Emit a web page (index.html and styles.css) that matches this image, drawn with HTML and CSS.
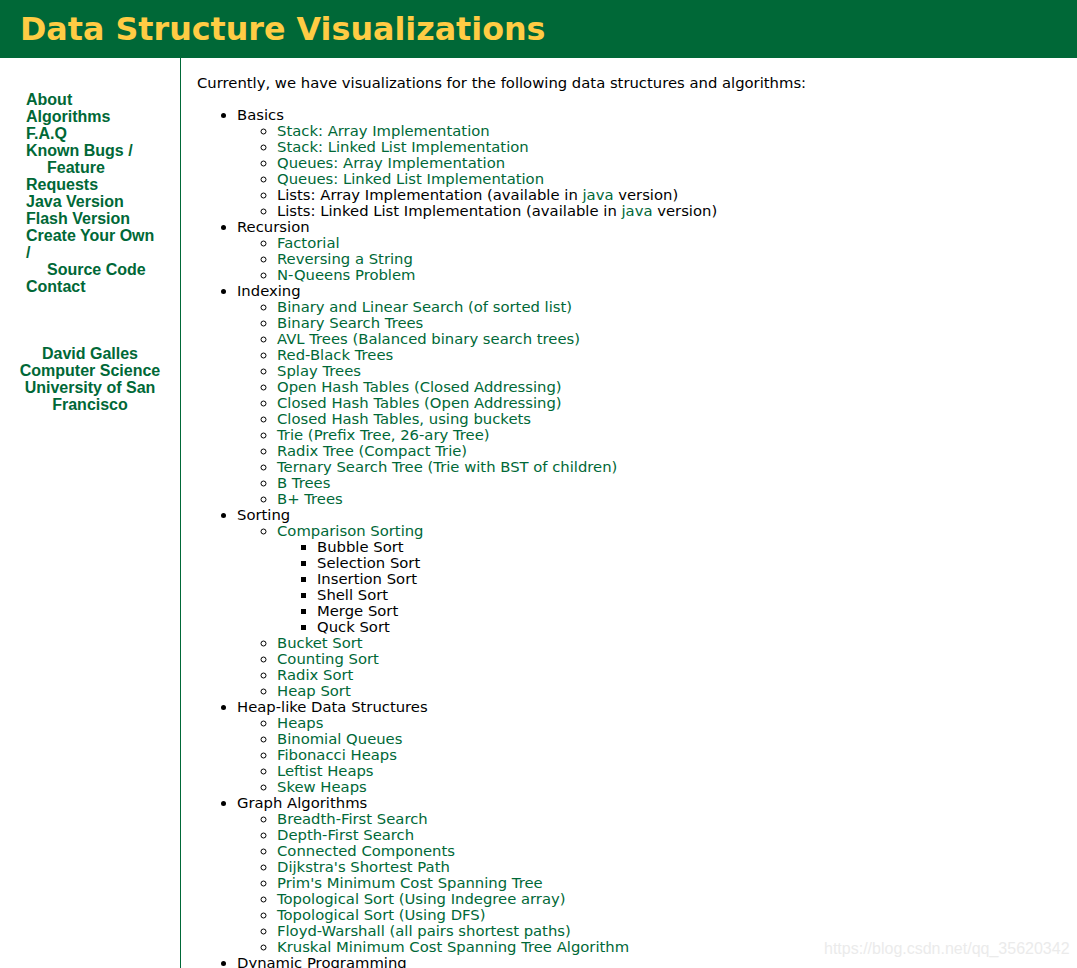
FILE: index.html
```html
<!DOCTYPE html>
<html>
<head>
<meta charset="utf-8">
<title>Data Structure Visualizations</title>
<link rel="stylesheet" href="styles.css">
</head>
<body>
<header class="header">
  <h1 class="title">Data Structure Visualizations</h1>
</header>
<div class="page">
  <nav class="sidebar">
    <ul class="nav">
      <li><a href="#">About</a></li>
      <li><a href="#">Algorithms</a></li>
      <li><a href="#">F.A.Q</a></li>
      <li><a href="#">Known Bugs /<br><span class="indent">Feature Requests</span></a></li>
      <li><a href="#">Java Version</a></li>
      <li><a href="#">Flash Version</a></li>
      <li><a href="#">Create Your Own /<br><span class="indent">Source Code</span></a></li>
      <li><a href="#">Contact</a></li>
    </ul>
    <div class="author">
      <a href="#">David Galles</a><br>
      <a href="#">Computer Science</a><br>
      <a href="#">University of San Francisco</a>
    </div>
  </nav>
  <main class="content">
    <p class="intro">Currently, we have visualizations for the following data structures and algorithms:</p>
    <ul class="l1">
      <li>Basics
        <ul class="l2">
          <li><a href="#">Stack: Array Implementation</a></li>
          <li><a href="#">Stack: Linked List Implementation</a></li>
          <li><a href="#">Queues: Array Implementation</a></li>
          <li><a href="#">Queues: Linked List Implementation</a></li>
          <li>Lists: Array Implementation (available in <a href="#">java</a> version)</li>
          <li>Lists: Linked List Implementation (available in <a href="#">java</a> version)</li>
        </ul>
      </li>
      <li>Recursion
        <ul class="l2">
          <li><a href="#">Factorial</a></li>
          <li><a href="#">Reversing a String</a></li>
          <li><a href="#">N-Queens Problem</a></li>
        </ul>
      </li>
      <li>Indexing
        <ul class="l2">
          <li><a href="#">Binary and Linear Search (of sorted list)</a></li>
          <li><a href="#">Binary Search Trees</a></li>
          <li><a href="#">AVL Trees (Balanced binary search trees)</a></li>
          <li><a href="#">Red-Black Trees</a></li>
          <li><a href="#">Splay Trees</a></li>
          <li><a href="#">Open Hash Tables (Closed Addressing)</a></li>
          <li><a href="#">Closed Hash Tables (Open Addressing)</a></li>
          <li><a href="#">Closed Hash Tables, using buckets</a></li>
          <li><a href="#">Trie (Prefix Tree, 26-ary Tree)</a></li>
          <li><a href="#">Radix Tree (Compact Trie)</a></li>
          <li><a href="#">Ternary Search Tree (Trie with BST of children)</a></li>
          <li><a href="#">B Trees</a></li>
          <li><a href="#">B+ Trees</a></li>
        </ul>
      </li>
      <li>Sorting
        <ul class="l2">
          <li><a href="#">Comparison Sorting</a>
            <ul class="l3">
              <li>Bubble Sort</li>
              <li>Selection Sort</li>
              <li>Insertion Sort</li>
              <li>Shell Sort</li>
              <li>Merge Sort</li>
              <li>Quck Sort</li>
            </ul>
          </li>
          <li><a href="#">Bucket Sort</a></li>
          <li><a href="#">Counting Sort</a></li>
          <li><a href="#">Radix Sort</a></li>
          <li><a href="#">Heap Sort</a></li>
        </ul>
      </li>
      <li>Heap-like Data Structures
        <ul class="l2">
          <li><a href="#">Heaps</a></li>
          <li><a href="#">Binomial Queues</a></li>
          <li><a href="#">Fibonacci Heaps</a></li>
          <li><a href="#">Leftist Heaps</a></li>
          <li><a href="#">Skew Heaps</a></li>
        </ul>
      </li>
      <li>Graph Algorithms
        <ul class="l2">
          <li><a href="#">Breadth-First Search</a></li>
          <li><a href="#">Depth-First Search</a></li>
          <li><a href="#">Connected Components</a></li>
          <li><a href="#">Dijkstra's Shortest Path</a></li>
          <li><a href="#">Prim's Minimum Cost Spanning Tree</a></li>
          <li><a href="#">Topological Sort (Using Indegree array)</a></li>
          <li><a href="#">Topological Sort (Using DFS)</a></li>
          <li><a href="#">Floyd-Warshall (all pairs shortest paths)</a></li>
          <li><a href="#">Kruskal Minimum Cost Spanning Tree Algorithm</a></li>
        </ul>
      </li>
      <li>Dynamic Programming
        <ul class="l2">
          <li><a href="#">Calculating nth Fibonacci number</a></li>
          <li><a href="#">Making Change</a></li>
          <li><a href="#">Longest Common Subsequence</a></li>
        </ul>
      </li>
    </ul>
  </main>
</div>
<div class="watermark">https://blog.csdn.net/qq_35620342</div>
</body>
</html>
```
FILE: styles.css
```css
html, body {
  margin: 0;
  padding: 0;
  background: #fff;
}
body {
  font-family: "DejaVu Sans", "Liberation Sans", Arial, sans-serif;
  font-size: 14.8px;
  color: #000;
}
a {
  color: #006837;
  text-decoration: none;
}
.header {
  background: #006837;
  height: 58px;
  display: flex;
  align-items: center;
  padding-left: 20px;
}
.title {
  margin: 0;
  font-family: "DejaVu Sans", sans-serif;
  font-weight: bold;
  font-size: 31.75px;
  color: #ffcc44;
  line-height: 1;
  padding-top: 2px;
}
.page {
  display: flex;
  align-items: stretch;
  min-height: 910px;
}
.sidebar {
  width: 180px;
  flex: none;
  border-right: 1px solid #006837;
  padding-top: 33px;
  font-family: "Liberation Sans", Arial, sans-serif;
  font-size: 16px;
}
.nav {
  list-style: none;
  margin: 0;
  padding: 0 22px 0 26px;
  font-weight: bold;
  line-height: 17px;
}
.indent {
  padding-left: 21px;
}
.author {
  margin-top: 50px;
  text-align: center;
  font-weight: bold;
  line-height: 17px;
  padding: 0 14px;
}
.content {
  flex: 1;
  padding-left: 16px;
  padding-top: 17px;
  line-height: 16px;
}
.intro {
  margin: 0 0 16px 0;
}
.content ul {
  margin: 0;
  padding-left: 40px;
  line-height: 16px;
}
.l1 { list-style: disc; }
.l2 { list-style: circle; }
.l3 { list-style: square; }
.watermark {
  position: absolute;
  left: 824px;
  top: 940px;
  font-family: "Liberation Sans", Arial, sans-serif;
  font-size: 16px;
  color: #ebebeb;
}
```
